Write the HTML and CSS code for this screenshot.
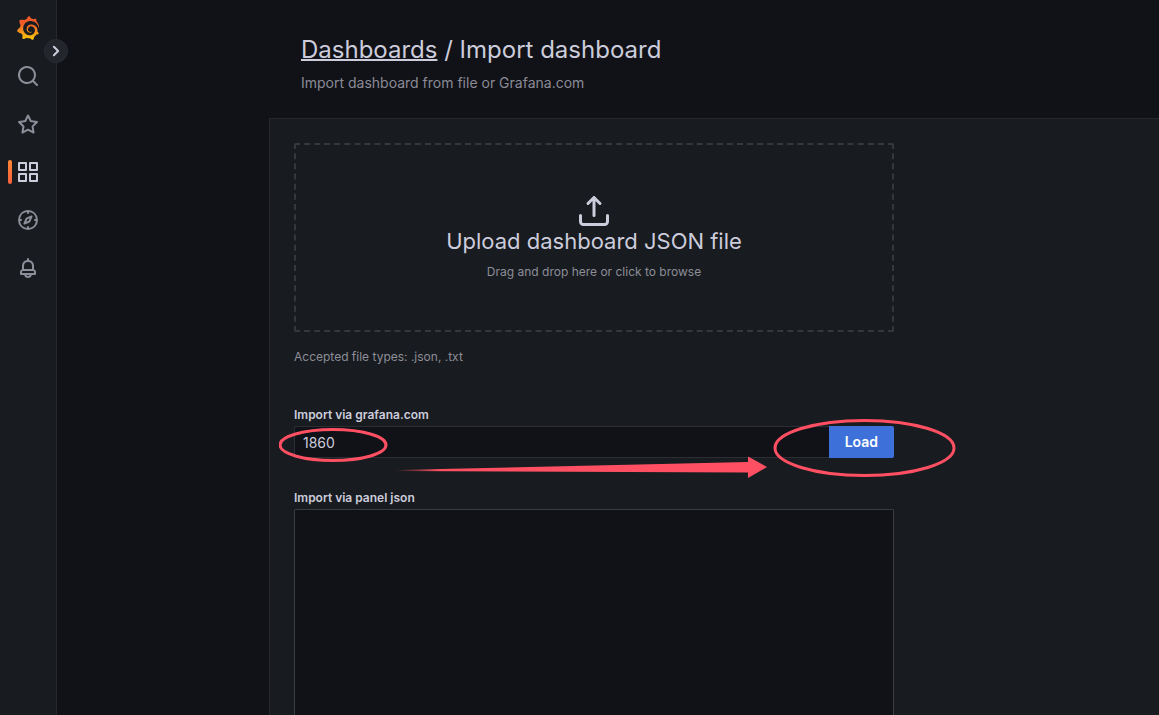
FILE: index.html
```html
<!DOCTYPE html>
<html lang="en">
<head>
<meta charset="utf-8">
<meta name="viewport" content="width=device-width, initial-scale=1">
<title>Import dashboard - Grafana</title>
<link rel="stylesheet" href="styles.css">
</head>
<body>
<div class="app">
  <nav class="sidebar" aria-label="Main menu">
    <a class="nav-item" href="#" aria-label="Home">
      <svg class="logo" viewBox="0 0 351 365" aria-hidden="true">
        <defs>
          <linearGradient id="flame" gradientUnits="userSpaceOnUse" x1="175" y1="445" x2="175" y2="114">
            <stop offset="0" stop-color="#fff100"/>
            <stop offset="1" stop-color="#f05a28"/>
          </linearGradient>
        </defs>
        <path fill="url(#flame)" d="M342,161.2c-0.6-6.1-1.6-13.1-3.6-20.9c-2-7.7-5-16.2-9.4-25c-4.4-8.8-10.1-17.9-17.5-26.8c-2.9-3.5-6.1-6.9-9.5-10.2c5.1-20.3-6.2-37.9-6.2-37.9c-19.5-1.2-31.9,6.1-36.5,9.4c-0.8-0.3-1.5-0.7-2.3-1c-3.3-1.3-6.7-2.6-10.3-3.7c-3.5-1.1-7.1-2.1-10.8-3c-3.7-0.9-7.4-1.6-11.2-2.2c-0.7-0.1-1.3-0.2-2-0.3c-8.5-27.2-32.9-38.6-32.9-38.6c-27.3,17.3-32.4,41.5-32.4,41.5s-0.1,0.5-0.3,1.4c-1.5,0.4-3,0.9-4.5,1.3c-2.1,0.6-4.2,1.4-6.2,2.2c-2.1,0.8-4.1,1.6-6.2,2.5c-4.1,1.8-8.2,3.8-12.2,6c-3.9,2.2-7.7,4.6-11.4,7.1c-0.5-0.2-1-0.4-1-0.4c-37.8-14.4-71.3,2.9-71.3,2.9c-3.1,40.2,15.1,65.5,18.7,70.1c-0.9,2.5-1.7,5-2.5,7.5c-2.8,9.1-4.9,18.4-6.2,28.1c-0.2,1.4-0.4,2.8-0.5,4.2C18.8,192.7,8.5,228,8.5,228c29.1,33.5,63.1,35.6,63.1,35.6c0,0,0.1-0.1,0.1-0.1c4.3,7.7,9.3,15,14.9,21.9c2.4,2.9,4.8,5.6,7.4,8.3c-10.6,30.4,1.5,55.6,1.5,55.6c32.4,1.2,53.7-14.2,58.2-17.7c3.2,1.1,6.5,2.1,9.8,2.9c10,2.6,20.2,4.1,30.4,4.5c2.5,0.1,5.1,0.2,7.6,0.1l1.2,0l0.8,0l1.6,0l1.6-0.1l0,0.1c15.3,21.8,42.1,24.9,42.1,24.9c19.1-20.1,20.2-40.1,20.2-44.4l0,0c0,0,0-0.1,0-0.3c0-0.4,0-0.6,0-0.6l0,0c0-0.3,0-0.6,0-0.9c4-2.8,7.8-5.8,11.4-9.1c7.6-6.9,14.3-14.8,19.9-23.3c0.5-0.8,1-1.6,1.5-2.4c21.6,1.2,36.9-13.4,36.9-13.4c-3.6-22.5-16.4-33.5-19.1-35.6l0,0c0,0-0.1-0.1-0.3-0.2c-0.2-0.1-0.2-0.2-0.2-0.2c0,0,0,0,0,0c-0.1-0.1-0.3-0.2-0.5-0.3c0.1-1.4,0.2-2.7,0.3-4.1c0.2-2.4,0.2-4.9,0.2-7.3l0-1.8l0-0.9l0-0.5c0-0.6,0-0.4,0-0.6l-0.1-1.5l-0.1-2c0-0.7-0.1-1.3-0.2-1.9c-0.1-0.6-0.1-1.3-0.2-1.9l-0.2-1.9l-0.3-1.9c-0.4-2.5-0.8-4.9-1.4-7.4c-2.3-9.7-6.1-18.9-11-27.2c-5-8.3-11.2-15.6-18.3-21.8c-7-6.2-14.9-11.2-23.1-14.9c-8.3-3.7-16.9-6.1-25.5-7.2c-4.3-0.6-8.6-0.8-12.9-0.7l-1.6,0l-0.4,0c-0.1,0-0.6,0-0.5,0l-0.7,0l-1.6,0.1c-0.6,0-1.2,0.1-1.7,0.1c-2.2,0.2-4.4,0.5-6.5,0.9c-8.6,1.6-16.7,4.7-23.8,9c-7.1,4.3-13.3,9.6-18.3,15.6c-5,6-8.9,12.7-11.6,19.6c-2.7,6.9-4.2,14.1-4.6,21c-0.1,1.7-0.1,3.5-0.1,5.2c0,0.4,0,0.9,0,1.3l0.1,1.4c0.1,0.8,0.1,1.7,0.2,2.5c0.3,3.5,1,6.9,1.9,10.1c1.9,6.5,4.9,12.4,8.6,17.4c3.7,5,8.2,9.1,12.9,12.4c4.7,3.2,9.8,5.5,14.8,7c5,1.5,10,2.1,14.7,2.1c0.6,0,1.2,0,1.7,0c0.3,0,0.6,0,0.9,0c0.3,0,0.6,0,0.9-0.1c0.5,0,1-0.1,1.5-0.1c0.1,0,0.3,0,0.4-0.1l0.5-0.1c0.3,0,0.6-0.1,0.9-0.1c0.6-0.1,1.1-0.2,1.7-0.3c0.6-0.1,1.1-0.2,1.6-0.4c1.1-0.2,2.1-0.6,3.1-0.9c2-0.7,4-1.5,5.7-2.4c1.8-0.9,3.4-2,5-3c0.4-0.3,0.9-0.6,1.3-1c1.6-1.3,1.9-3.7,0.6-5.3c-1.1-1.4-3.1-1.8-4.7-0.9c-0.4,0.2-0.8,0.4-1.2,0.6c-1.4,0.7-2.8,1.3-4.3,1.8c-1.5,0.5-3.1,0.9-4.7,1.2c-0.8,0.1-1.6,0.2-2.5,0.3c-0.4,0-0.8,0.1-1.3,0.1c-0.4,0-0.9,0-1.2,0c-0.4,0-0.8,0-1.2,0c-0.5,0-1,0-1.5-0.1c0,0-0.3,0-0.1,0l-0.2,0l-0.3,0c-0.2,0-0.5,0-0.7-0.1c-0.5-0.1-0.9-0.1-1.4-0.2c-3.7-0.5-7.4-1.6-10.9-3.2c-3.6-1.6-7-3.8-10.1-6.6c-3.1-2.8-5.8-6.1-7.9-9.9c-2.1-3.8-3.6-8-4.3-12.4c-0.3-2.2-0.5-4.5-0.4-6.7c0-0.6,0.1-1.2,0.1-1.8c0,0.2,0-0.1,0-0.1l0-0.2l0-0.5c0-0.3,0.1-0.6,0.1-0.9c0.1-1.2,0.3-2.4,0.5-3.6c1.7-9.6,6.5-19,13.9-26.1c1.9-1.8,3.9-3.4,6-4.9c2.1-1.5,4.4-2.8,6.8-3.9c2.4-1.1,4.8-2,7.4-2.7c2.5-0.7,5.1-1.1,7.8-1.4c1.3-0.1,2.6-0.2,4-0.2c0.4,0,0.6,0,0.9,0l1.1,0l0.7,0c0.3,0,0,0,0.1,0l0.3,0l1.1,0.1c2.9,0.2,5.7,0.6,8.5,1.3c5.6,1.2,11.1,3.3,16.2,6.1c10.2,5.7,18.9,14.5,24.2,25.1c2.7,5.3,4.6,11,5.5,16.9c0.2,1.5,0.4,3,0.5,4.5l0.1,1.1l0.1,1.1c0,0.4,0,0.8,0,1.1c0,0.4,0,0.8,0,1.1l0,1l0,1.1c0,0.7-0.1,1.9-0.1,2.6c-0.1,1.6-0.3,3.3-0.5,4.9c-0.2,1.6-0.5,3.2-0.8,4.8c-0.3,1.6-0.7,3.2-1.1,4.7c-0.8,3.1-1.8,6.2-3,9.3c-2.4,6-5.6,11.8-9.4,17.1c-7.7,10.6-18.2,19.2-30.2,24.7c-6,2.7-12.3,4.7-18.8,5.7c-3.2,0.6-6.5,0.9-9.8,1l-0.6,0l-0.5,0l-1.1,0l-1.6,0l-0.8,0c0.4,0-0.1,0-0.1,0l-0.3,0c-1.8,0-3.5-0.1-5.3-0.3c-7-0.5-13.9-1.8-20.7-3.7c-6.7-1.9-13.2-4.6-19.4-7.8c-12.3-6.6-23.4-15.6-32-26.5c-4.3-5.4-8.1-11.3-11.2-17.4c-3.1-6.1-5.6-12.6-7.4-19.1c-1.8-6.6-2.9-13.3-3.4-20.1l-0.1-1.3l0-0.3l0-0.3l0-0.6l0-1.1l0-0.3l0-0.4l0-0.8l0-1.6l0-0.3c0,0,0,0.1,0-0.1l0-0.6c0-0.8,0-1.7,0-2.5c0.1-3.3,0.4-6.8,0.8-10.2c0.4-3.4,1-6.9,1.7-10.3c0.7-3.4,1.5-6.8,2.5-10.2c1.9-6.7,4.3-13.2,7.1-19.3c5.7-12.2,13.1-23.1,22-31.8c2.2-2.2,4.5-4.2,6.9-6.2c2.4-1.9,4.9-3.7,7.5-5.4c2.5-1.7,5.2-3.2,7.9-4.6c1.3-0.7,2.7-1.4,4.1-2c0.7-0.3,1.4-0.6,2.1-0.9c0.7-0.3,1.4-0.6,2.1-0.9c2.8-1.2,5.7-2.2,8.7-3.1c0.7-0.2,1.5-0.4,2.2-0.7c0.7-0.2,1.5-0.4,2.2-0.6c1.5-0.4,3-0.8,4.5-1.1c0.7-0.2,1.5-0.3,2.3-0.5c0.8-0.2,1.5-0.3,2.3-0.5c0.8-0.1,1.5-0.3,2.3-0.4l1.1-0.2l1.2-0.2c0.8-0.1,1.5-0.2,2.3-0.3c0.9-0.1,1.7-0.2,2.6-0.3c0.7-0.1,1.9-0.2,2.6-0.3c0.5-0.1,1.1-0.1,1.6-0.2l1.1-0.1l0.5-0.1l0.6,0c0.9-0.1,1.7-0.1,2.6-0.2l1.3-0.1c0,0,0.5,0,0.1,0l0.3,0l0.6,0c0.7,0,1.5-0.1,2.2-0.1c2.9-0.1,5.9-0.1,8.8,0c5.8,0.2,11.5,0.9,17,1.9c11.1,2.1,21.5,5.6,31,10.3c9.5,4.6,17.9,10.3,25.3,16.5c0.5,0.4,0.9,0.8,1.4,1.2c0.4,0.4,0.9,0.8,1.3,1.2c0.9,0.8,1.7,1.6,2.6,2.4c0.9,0.8,1.7,1.6,2.5,2.4c0.8,0.8,1.6,1.6,2.4,2.5c3.1,3.3,6,6.6,8.6,10c5.2,6.7,9.4,13.5,12.7,19.9c0.2,0.4,0.4,0.8,0.6,1.2c0.2,0.4,0.4,0.8,0.6,1.2c0.4,0.8,0.8,1.6,1.1,2.4c0.4,0.8,0.7,1.5,1.1,2.3c0.3,0.8,0.7,1.5,1,2.3c1.2,3,2.4,5.9,3.3,8.6c1.5,4.4,2.6,8.3,3.5,11.7c0.3,1.4,1.6,2.3,3,2.1c1.5-0.1,2.6-1.3,2.6-2.8C342.6,170.4,342.5,166.1,342,161.2z"/>
      </svg>
    </a>
    <a class="nav-item" href="#" aria-label="Search dashboards">
      <svg class="icon" viewBox="0 0 24 24" aria-hidden="true"><path d="M21.71,20.29,18,16.61A9,9,0,1,0,16.61,18l3.68,3.68a1,1,0,0,0,1.42,0A1,1,0,0,0,21.71,20.29ZM11,18a7,7,0,1,1,7-7A7,7,0,0,1,11,18Z"/></svg>
    </a>
    <a class="nav-item" href="#" aria-label="Starred">
      <svg class="icon" viewBox="0 0 24 24" aria-hidden="true"><path d="M22,9.67A1,1,0,0,0,21.14,9l-5.69-.83L12.9,3a1,1,0,0,0-1.8,0L8.55,8.16,2.86,9a1,1,0,0,0-.81.68,1,1,0,0,0,.25,1l4.13,4-1,5.68A1,1,0,0,0,6.9,21.44L12,18.77l5.1,2.67a.93.93,0,0,0,.46.12,1,1,0,0,0,.59-.19,1,1,0,0,0,.4-1l-1-5.68,4.13-4A1,1,0,0,0,22,9.67Zm-6.15,4a1,1,0,0,0-.29.88l.72,4.2-3.76-2a1.06,1.06,0,0,0-.94,0l-3.76,2,.72-4.2a1,1,0,0,0-.29-.88l-3-3,4.21-.61a1,1,0,0,0,.76-.55L12,5.7l1.88,3.82a1,1,0,0,0,.76.55l4.21.61Z"/></svg>
    </a>
    <a class="nav-item nav-item-active" href="#" aria-label="Dashboards" aria-current="page">
      <svg class="icon" viewBox="0 0 24 24" aria-hidden="true"><path d="M10,13H3a1,1,0,0,0-1,1v7a1,1,0,0,0,1,1h7a1,1,0,0,0,1-1V14A1,1,0,0,0,10,13ZM9,20H4V15H9ZM21,2H14a1,1,0,0,0-1,1v7a1,1,0,0,0,1,1h7a1,1,0,0,0,1-1V3A1,1,0,0,0,21,2ZM20,9H15V4h5Zm1,4H14a1,1,0,0,0-1,1v7a1,1,0,0,0,1,1h7a1,1,0,0,0,1-1V14A1,1,0,0,0,21,13Zm-1,7H15V15h5ZM10,2H3A1,1,0,0,0,2,3v7a1,1,0,0,0,1,1h7a1,1,0,0,0,1-1V3A1,1,0,0,0,10,2ZM9,9H4V4H9Z"/></svg>
    </a>
    <a class="nav-item" href="#" aria-label="Explore">
      <svg class="icon" viewBox="0 0 24 24" aria-hidden="true"><path d="M12,2A10,10,0,1,0,22,12,10,10,0,0,0,12,2Zm1,17.93V19a1,1,0,0,0-2,0v.93A8,8,0,0,1,4.07,13H5a1,1,0,0,0,0-2H4.07A8,8,0,0,1,11,4.07V5a1,1,0,0,0,2,0V4.07A8,8,0,0,1,19.93,11H19a1,1,0,0,0,0,2h.93A8,8,0,0,1,13,19.93ZM15.14,7.55l-5,2.12a1,1,0,0,0-.52.52l-2.12,5a1,1,0,0,0,.21,1.1,1,1,0,0,0,.7.3.93.93,0,0,0,.4-.09l5-2.12a1,1,0,0,0,.52-.52l2.12-5a1,1,0,0,0-1.31-1.31Zm-2.49,5.1-2.28,1,1-2.28,2.28-1Z"/></svg>
    </a>
    <a class="nav-item" href="#" aria-label="Alerting">
      <svg class="icon" viewBox="0 0 24 24" aria-hidden="true"><path d="M18,13.18V10a6,6,0,0,0-5-5.91V3a1,1,0,0,0-2,0V4.09A6,6,0,0,0,6,10v3.18A3,3,0,0,0,4,16v2a1,1,0,0,0,1,1H8.14a4,4,0,0,0,7.72,0H19a1,1,0,0,0,1-1V16A3,3,0,0,0,18,13.18ZM8,10a4,4,0,0,1,8,0v3H8Zm4,10a2,2,0,0,1-1.72-1h3.44A2,2,0,0,1,12,20Zm6-3H6V16a1,1,0,0,1,1-1H17a1,1,0,0,1,1,1Z"/></svg>
    </a>
    <button class="expand" type="button" aria-label="Expand menu">
      <svg class="icon" viewBox="0 0 24 24" aria-hidden="true"><path d="M14.83,11.29,10.59,7.05a1,1,0,0,0-1.42,0,1,1,0,0,0,0,1.41L12.71,12,9.17,15.54a1,1,0,0,0,0,1.41,1,1,0,0,0,.71.29,1,1,0,0,0,.71-.29l4.24-4.24A1,1,0,0,0,14.83,11.29Z"/></svg>
    </button>
  </nav>

  <main class="page">
    <header class="page-header">
      <h1 class="title"><a class="title-link" href="#">Dashboards</a> / Import dashboard</h1>
      <p class="subtitle">Import dashboard from file or Grafana.com</p>
    </header>
    <div class="panel">
      <form class="import-form">
        <button class="dropzone" type="button">
          <svg class="upload-icon" viewBox="0 0 24 24" aria-hidden="true"><path d="M8.71,7.71,11,5.41V15a1,1,0,0,0,2,0V5.41l2.29,2.3a1,1,0,0,0,1.42,0,1,1,0,0,0,0-1.42l-4-4a1,1,0,0,0-.33-.21,1,1,0,0,0-.76,0,1,1,0,0,0-.33.21l-4,4A1,1,0,1,0,8.71,7.71ZM21,14a1,1,0,0,0-1,1v4a1,1,0,0,1-1,1H5a1,1,0,0,1-1-1V15a1,1,0,0,0-2,0v4a3,3,0,0,0,3,3H19a3,3,0,0,0,3-3V15A1,1,0,0,0,21,14Z"/></svg>
          <span class="dropzone-title">Upload dashboard JSON file</span>
          <span class="dropzone-hint">Drag and drop here or click to browse</span>
        </button>
        <p class="file-types">Accepted file types: .json, .txt</p>

        <div class="field">
          <label class="label" for="gcom">Import via grafana.com</label>
          <div class="input-row">
            <input class="input" id="gcom" type="text" value="1860">
            <button class="load" type="submit">Load</button>
          </div>
        </div>
        <div class="field field-grow">
          <label class="label" for="json">Import via panel json</label>
          <textarea class="textarea" id="json"></textarea>
        </div>

        <svg class="annotation" viewBox="0 0 680 64" aria-hidden="true">
          <defs>
            <linearGradient id="tail" x1="0" x2="1" y1="0" y2="0">
              <stop offset="0" stop-color="#ff5063" stop-opacity="0"/>
              <stop offset="0.12" stop-color="#ff5063"/>
            </linearGradient>
          </defs>
          <ellipse class="ring" cx="54" cy="27" rx="53" ry="15.5"/>
          <ellipse class="ring" cx="585.5" cy="30" rx="89.5" ry="27.5"/>
          <path fill="url(#tail)" d="M116 52 469 44v-5.500L488 49 469 60v-5.500L116 53Z"/>
        </svg>
      </form>
    </div>
  </main>
</div>
</body>
</html>
```
FILE: styles.css
```css
* {
  box-sizing: border-box;
}

body {
  margin: 0;
  background: #111217;
  color: #ccccdc;
  font: 14px/22px Inter, "Liberation Sans", sans-serif;
}

h1,
p {
  margin: 0;
  font-weight: 400;
}

button,
input,
textarea {
  font: inherit;
  color: inherit;
}

.app {
  display: flex;
  height: 100vh;
  overflow: hidden;
}

.sidebar {
  position: relative;
  flex: none;
  display: flex;
  flex-direction: column;
  width: 57px;
  padding-top: 4px;
  background: #181b1f;
  border-right: 1px solid #25272c;
}

.nav-item {
  position: relative;
  display: flex;
  align-items: center;
  justify-content: center;
  height: 48px;
  color: #8d8e9a;
}

.nav-item-active {
  color: #ccccdc;
}

.nav-item-active::before {
  content: "";
  position: absolute;
  left: 8px;
  width: 4px;
  height: 24px;
  border-radius: 2px;
  background: linear-gradient(#ff8833, #f55f3e);
}

.logo {
  width: 24px;
  height: 24px;
}

.icon {
  width: 24px;
  height: 24px;
  fill: currentColor;
}

.expand {
  position: absolute;
  top: 39px;
  right: -12px;
  display: flex;
  align-items: center;
  justify-content: center;
  width: 24px;
  height: 24px;
  padding: 0;
  border: 1px solid #2a2c31;
  border-radius: 50%;
  background: #22252b;
}

.expand .icon {
  flex: none;
}

.page {
  flex: 1;
  min-width: 0;
  display: flex;
  flex-direction: column;
  padding-left: 212px;
}

.page-header {
  padding: 36px 32px 24px;
}

.title {
  font-size: 24px;
  line-height: 28px;
}

.title-link {
  color: inherit;
  text-decoration: underline 2px;
}

.subtitle {
  margin-top: 8px;
  color: #8a8b96;
}

.panel {
  flex: 1;
  display: flex;
  min-height: 0;
  padding: 24px 24px 0;
  background: #181b1f;
  border: solid #25272c;
  border-width: 1px 0 0 1px;
}

.import-form {
  position: relative;
  flex: 1;
  display: flex;
  flex-direction: column;
  max-width: 600px;
}

.dropzone {
  display: flex;
  flex-direction: column;
  align-items: center;
  padding: 48px 24px;
  border: 2px dashed #35373d;
  border-radius: 2px;
  background: none;
}

.upload-icon {
  width: 36px;
  height: 36px;
  fill: currentColor;
}

.dropzone-title {
  font-size: 22px;
  line-height: 24px;
}

.dropzone-hint {
  margin-top: 9px;
  color: #8d8e99;
  font-size: 12px;
  line-height: 20px;
}

.file-types {
  margin: 15px 0 40px;
  color: #8d8e99;
  font-size: 12px;
  line-height: 20px;
}

.field {
  display: flex;
  flex-direction: column;
  margin-bottom: 32px;
}

.field-grow {
  flex: 1;
  margin-bottom: 0;
}

.label {
  margin-bottom: 3px;
  font-size: 12px;
  font-weight: 600;
  line-height: 16px;
}

.input-row {
  display: flex;
}

.input {
  flex: 1;
  min-width: 0;
  height: 32px;
  padding: 0 8px;
  border: 1px solid #2d2e34;
  border-right: 0;
  border-radius: 2px 0 0 2px;
  background: #111217;
}

.load {
  height: 32px;
  padding: 0 16px;
  border: 0;
  border-radius: 0 2px 2px 0;
  background: #3d71d9;
  color: #fff;
  font-weight: 600;
}

.textarea {
  flex: 1;
  padding: 8px;
  border: 1px solid #3c3d43;
  border-bottom: 0;
  border-radius: 2px 2px 0 0;
  background: #111217;
  resize: none;
}

.annotation {
  position: absolute;
  top: 275px;
  left: -15px;
  width: 680px;
  height: 64px;
  pointer-events: none;
}

.ring {
  fill: none;
  stroke: #ff5063;
  stroke-width: 3;
}
```
